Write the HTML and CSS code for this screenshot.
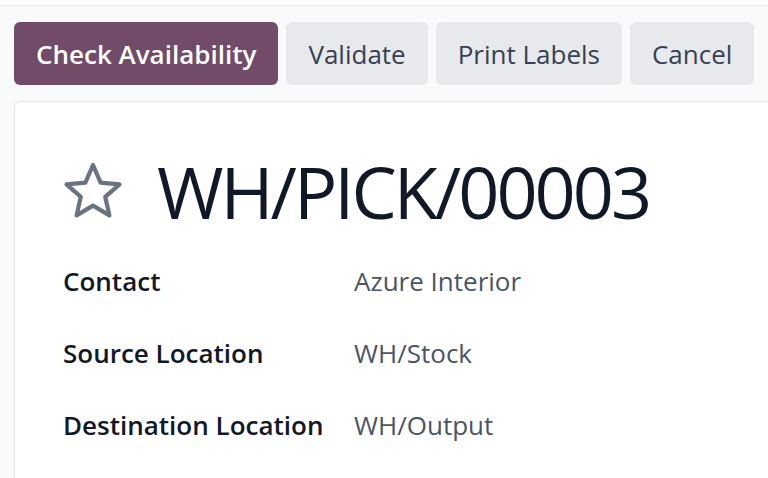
FILE: index.html
```html
<!DOCTYPE html>
<html>
<head>
<meta charset="utf-8">
<link rel="stylesheet" href="styles.css">
</head>
<body>
<div class="page">
  <div class="control-panel">
    <div class="buttons">
      <button class="btn btn-primary">Check Availability</button>
      <button class="btn btn-secondary">Validate</button>
      <button class="btn btn-secondary">Print Labels</button>
      <button class="btn btn-secondary">Cancel</button>
    </div>
  </div>
  <div class="sheet">
    <div class="title-row">
      <svg class="star" viewBox="0 0 60 58" width="60" height="58">
        <polygon points="30,3 37.6,20.6 56.5,22.3 42.2,34.8 46.4,53.4 30,43.6 13.6,53.4 17.8,34.8 3.5,22.3 22.4,20.6" fill="none" stroke="#6b7280" stroke-width="4.2" stroke-linejoin="round"/>
      </svg>
      <h1 class="title">WH/PICK/00003</h1>
    </div>
    <div class="fields">
      <div class="field">
        <div class="label">Contact</div>
        <div class="value">Azure Interior</div>
      </div>
      <div class="field">
        <div class="label">Source Location</div>
        <div class="value">WH/Stock</div>
      </div>
      <div class="field">
        <div class="label">Destination Location</div>
        <div class="value">WH/Output</div>
      </div>
    </div>
  </div>
</div>
</body>
</html>
```

FILE: styles.css
```css
* { box-sizing: border-box; }
html, body { margin: 0; padding: 0; }
body {
  background: #ffffff;
  font-family: "Open Sans", "Noto Sans", sans-serif;
  overflow: hidden;
  width: 768px;
  height: 478px;
}
.page {
  margin-top: 5px;
  border-top: 1px solid #e5e7eb;
  background: #f9fafb;
  height: 473px;
}
.control-panel {
  padding: 16px 0 0 14px;
}
.buttons {
  display: flex;
  gap: 8px;
}
.btn {
  height: 63px;
  border: none;
  border-radius: 6px;
  font-family: inherit;
  font-size: 26px;
  padding: 0 22px;
  white-space: nowrap;
}
.btn-primary {
  background: #714b67;
  color: #ffffff;
  font-weight: 600;
}
.btn-secondary {
  background: #e7e9ed;
  color: #374151;
}
.sheet {
  margin: 16px 0 0 14px;
  background: #ffffff;
  border: 1px solid #e2e4e8;
  border-right: none;
  border-radius: 6px 0 0 0;
  height: 380px;
  padding: 0 0 0 48px;
}
.title-row {
  display: flex;
  align-items: center;
  gap: 34px;
  padding-top: 46px;
}
.star { display: block; }
.title {
  margin: 0;
  font-size: 72px;
  font-weight: 500;
  letter-spacing: -3px;
  color: #111827;
  line-height: 1.2;
}
.fields {
  margin-top: 29px;
}
.field {
  display: flex;
  height: 72px;
  align-items: flex-start;
}
.label {
  width: 291px;
  font-size: 26px;
  font-weight: 600;
  color: #111827;
}
.value {
  font-size: 26px;
  color: #4b5563;
}
```
